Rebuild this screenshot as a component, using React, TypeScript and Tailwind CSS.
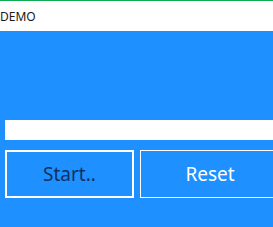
export default function App() {
  return (
    <div className="w-[273px] h-[227px] overflow-hidden bg-[#1e90ff] font-['Noto_Sans',sans-serif]">
      <div className="h-[31px] bg-white border-t border-[#10a850] flex items-center">
        <span className="text-[12px] leading-none text-[#1a1a1a] pt-[1px]">DEMO</span>
      </div>
      <div className="pl-[5px] pt-[89px]">
        <div className="h-5 bg-white" />
        <div className="mt-[10px] flex gap-[6px]">
          <button className="w-[129px] h-12 shrink-0 border-2 border-white text-[19px] text-[#12305f]">
            Start..
          </button>
          <button className="w-[140px] h-12 shrink-0 border border-white text-[19px] text-white">
            Reset
          </button>
        </div>
      </div>
    </div>
  );
}
